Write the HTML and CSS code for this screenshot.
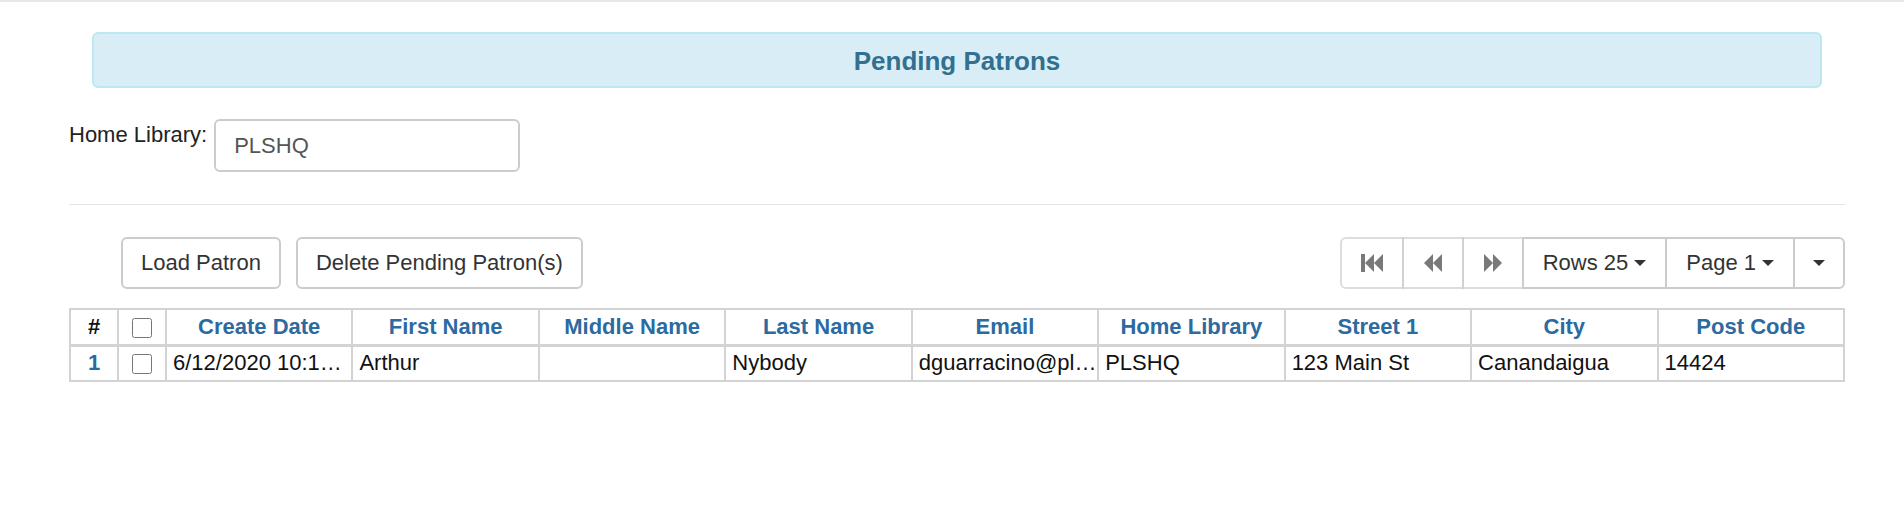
FILE: index.html
```html
<!DOCTYPE html>
<html lang="en">
<head>
    <meta charset="UTF-8">
    <meta name="viewport" content="width=device-width, initial-scale=1.0">
    <title>Pending Patrons</title>
    <link rel="stylesheet" href="styles.css">
</head>
<body>
    <div class="topbar"></div>
    <div class="container">
        <div class="page-title">Pending Patrons</div>

        <div class="filter-row">
            <label for="homeLibrary">Home Library:</label>
            <input type="text" id="homeLibrary" class="form-control" value="PLSHQ">
        </div>

        <hr>

        <div class="toolbar">
            <div class="actions">
                <button class="btn">Load Patron</button>
                <button class="btn">Delete Pending Patron(s)</button>
            </div>
            <div class="pager">
                <button class="btn" disabled>
                    <svg class="icon" width="22" height="18" viewBox="0 0 22 18"><rect x="0" y="0" width="4" height="18"/><polygon points="13,0 4,9 13,18"/><polygon points="22,0 13,9 22,18"/></svg>
                </button>
                <button class="btn" disabled>
                    <svg class="icon" width="20" height="18" viewBox="-1 0 20 18"><polygon points="9,0 0,9 9,18"/><polygon points="18,0 9,9 18,18"/></svg>
                </button>
                <button class="btn" disabled>
                    <svg class="icon" width="20" height="18" viewBox="-1 0 20 18"><polygon points="0,0 9,9 0,18"/><polygon points="9,0 18,9 9,18"/></svg>
                </button>
                <button class="btn">Rows 25<span class="caret"></span></button>
                <button class="btn">Page 1<span class="caret"></span></button>
                <button class="btn caret-only"><span class="caret"></span></button>
            </div>
        </div>

        <table class="grid">
            <thead>
                <tr>
                    <th class="num">#</th>
                    <th class="sel"><input type="checkbox"></th>
                    <th>Create Date</th>
                    <th>First Name</th>
                    <th>Middle Name</th>
                    <th>Last Name</th>
                    <th>Email</th>
                    <th>Home Library</th>
                    <th>Street 1</th>
                    <th>City</th>
                    <th>Post Code</th>
                </tr>
            </thead>
            <tbody>
                <tr>
                    <td class="num">1</td>
                    <td class="sel"><input type="checkbox"></td>
                    <td>6/12/2020 10:12:38 AM</td>
                    <td>Arthur</td>
                    <td></td>
                    <td>Nybody</td>
                    <td>dguarracino@pls-net.org</td>
                    <td>PLSHQ</td>
                    <td>123 Main St</td>
                    <td>Canandaigua</td>
                    <td>14424</td>
                </tr>
            </tbody>
        </table>
    </div>
</body>
</html>
```

FILE: styles.css
```css
body {
    margin: 0;
    font-family: "Liberation Sans", Arial, Helvetica, sans-serif;
    font-size: 22px;
    line-height: 1.42857;
    color: #333;
    background: #fff;
}
.topbar {
    border-top: 2px solid #e7e7e7;
}
.container {
    margin-left: 69px;
    width: 1776px;
}
.page-title {
    margin: 30px 23px 0;
    height: 56px;
    box-sizing: border-box;
    padding-top: 3px;
    border: 2px solid #bce8f1;
    border-radius: 6px;
    background-color: #d9edf7;
    color: #31708f;
    font-size: 26px;
    font-weight: bold;
    display: flex;
    align-items: center;
    justify-content: center;
}
.filter-row {
    display: flex;
    align-items: flex-start;
    margin-top: 31px;
}
.filter-row label {
    margin-right: 7px;
    color: #222;
}
.form-control {
    width: 306px;
    height: 53px;
    box-sizing: border-box;
    margin: 0;
    padding: 0 18px;
    border: 2px solid #ccc;
    border-radius: 6px;
    font: inherit;
    color: #555;
}
hr {
    border: 0;
    border-top: 1px solid #e5e5e5;
    margin: 32px 0;
}
.toolbar {
    display: flex;
    justify-content: space-between;
    align-items: flex-start;
}
.actions {
    display: flex;
    gap: 15px;
    margin-left: 52px;
}
.btn {
    height: 52px;
    box-sizing: border-box;
    margin: 0;
    padding: 0 18px;
    border: 2px solid #ccc;
    border-radius: 6px;
    background-color: #fff;
    color: #333;
    font: inherit;
    display: inline-flex;
    align-items: center;
    cursor: pointer;
}
.btn:disabled {
    opacity: 0.65;
    cursor: default;
}
.pager {
    display: flex;
}
.pager .btn {
    padding: 0 19px;
    margin-left: -2px;
    border-radius: 0;
}
.pager .btn:first-child {
    margin-left: 0;
    border-radius: 6px 0 0 6px;
}
.pager .btn:last-child {
    border-radius: 0 6px 6px 0;
}
.pager .caret-only {
    padding: 0 18px;
}
.icon {
    fill: #333;
    display: block;
}
.caret {
    display: inline-block;
    width: 0;
    height: 0;
    margin-left: 6px;
    border-top: 6px solid #333;
    border-left: 6px solid transparent;
    border-right: 6px solid transparent;
}
.caret-only .caret {
    margin-left: 0;
}
.grid {
    margin-top: 19px;
    width: 1776px;
    table-layout: fixed;
    border-collapse: separate;
    border-spacing: 0;
    border: 2px solid #d3d3d3;
}
.grid th,
.grid td {
    box-sizing: border-box;
    border-left: 2px solid #d3d3d3;
    padding: 0;
    white-space: nowrap;
    overflow: hidden;
    text-overflow: ellipsis;
}
.grid th:first-child,
.grid td:first-child {
    border-left: 0;
}
.grid th {
    line-height: 34px;
    border-bottom: 3px solid #d3d3d3;
    color: #2c6aa0;
    font-weight: bold;
    text-align: center;
}
.grid td {
    line-height: 31px;
    padding: 0 0 2px 6px;
    color: #111;
    text-align: left;
}
.grid th.num {
    width: 46px;
    color: #111;
}
.grid th.sel {
    width: 48px;
}
.grid td.num {
    padding-left: 0;
    text-align: center;
    font-weight: bold;
    color: #2c6aa0;
}
.grid td.sel {
    padding-left: 0;
    text-align: center;
}
.grid input[type="checkbox"] {
    width: 20px;
    height: 20px;
    margin: 0;
    vertical-align: middle;
}
```
